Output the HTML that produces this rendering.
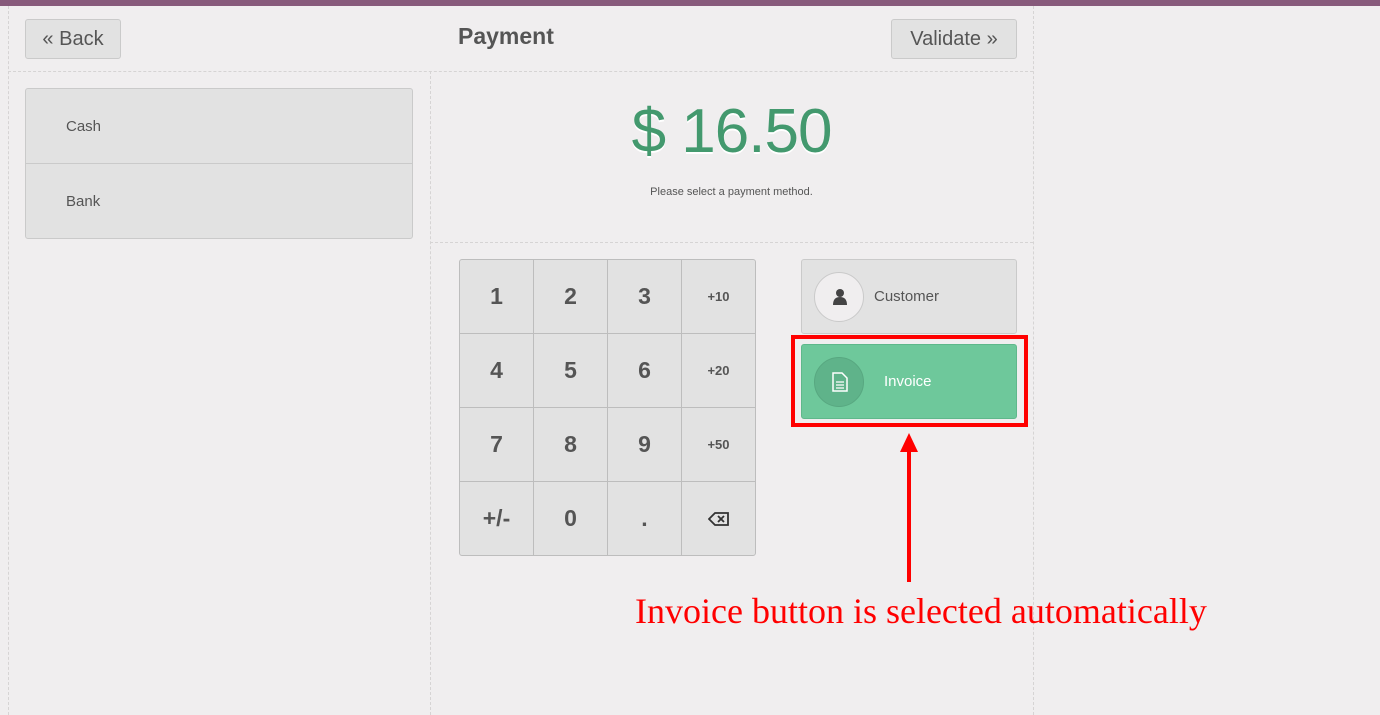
<!DOCTYPE html>
<html><head><style>
*{box-sizing:border-box;margin:0;padding:0}
body{width:1380px;height:715px;background:#f0eeef;font-family:"Liberation Sans",sans-serif;color:#555;position:relative;overflow:hidden}
.a{position:absolute}
.bar{left:0;top:0;width:1380px;height:6px;background:#875a7b}
.dv{border-left:1px dashed #d6d4d4}
.dh{border-top:1px dashed #d6d4d4}
.btn{background:#e2e2e2;border:1px solid #cacaca;border-radius:3px;font-size:20px;color:#555;display:flex;align-items:center;justify-content:center}
.pm{left:25px;top:88px;width:388px;height:151px;background:#e2e2e2;border:1px solid #cacaca;border-radius:3px}
.pm div{height:75px;line-height:75px;padding-left:40px;font-size:15px;color:#555}
.np{left:459px;top:259px;width:297px;height:297px;border:1px solid #bdbdbd;border-radius:3px;background:#e2e2e2;display:grid;grid-template-columns:74px 74px 74px 73px;grid-template-rows:74px 74px 74px 73px;overflow:hidden}
.np div{border-right:1px solid #bdbdbd;border-bottom:1px solid #bdbdbd;display:flex;align-items:center;justify-content:center;font-size:23px;font-weight:bold;color:#555}
.np div.s{font-size:13px}
.np div:nth-child(4n){border-right:none}
.np div:nth-child(n+13){border-bottom:none}
.circ{position:absolute;left:12px;top:12px;width:50px;height:50px;border-radius:50%}
</style></head><body>
<div class="a bar"></div>
<div class="a dv" style="left:8px;top:6px;height:709px"></div>
<div class="a dv" style="left:1033px;top:6px;height:709px"></div>
<div class="a dh" style="left:8px;top:71px;width:1025px"></div>
<div class="a dv" style="left:430px;top:71px;height:644px"></div>
<div class="a dh" style="left:430px;top:242px;width:603px"></div>

<div class="a btn" style="left:25px;top:19px;width:96px;height:40px">« Back</div>
<div class="a" style="left:458px;top:23px;font-size:23px;font-weight:bold;color:#555">Payment</div>
<div class="a btn" style="left:891px;top:19px;width:126px;height:40px">Validate »</div>

<div class="a pm"><div style="border-bottom:1px solid #cacaca">Cash</div><div>Bank</div></div>

<div class="a" style="left:430px;top:96px;width:603px;text-align:center;font-size:62px;letter-spacing:-1px;color:#43996e;text-shadow:0 2px #fff">$ 16.50</div>
<div class="a" style="left:430px;top:186px;width:603px;text-align:center;font-size:11px;color:#555">Please select a payment method.</div>

<div class="a np">
<div>1</div><div>2</div><div>3</div><div class="s">+10</div>
<div>4</div><div>5</div><div>6</div><div class="s">+20</div>
<div>7</div><div>8</div><div>9</div><div class="s">+50</div>
<div>+/-</div><div>0</div><div>.</div><div><svg width="22" height="16" viewBox="0 0 22 16"><path d="M7 2H20V14H7L1 8Z" fill="none" stroke="#333" stroke-width="1.8"/><path d="M10 5L16 11M16 5L10 11" stroke="#333" stroke-width="1.8"/></svg></div>
</div>

<div class="a" style="left:801px;top:259px;width:216px;height:75px;background:#e2e2e2;border:1px solid #cacaca;border-radius:3px">
<div class="circ" style="background:#f0eeef;border:1px solid #cacaca"><svg class="a" style="left:17px;top:15px" width="16" height="18" viewBox="0 0 16 18"><circle cx="8" cy="5" r="4" fill="#444"/><path d="M1 17Q1 9 8 9Q15 9 15 17Z" fill="#444"/></svg></div>
<div class="a" style="left:72px;top:28px;font-size:15px;color:#555">Customer</div>
</div>

<div class="a" style="left:791px;top:335px;width:237px;height:92px;border:4px solid #f00"></div>
<div class="a" style="left:801px;top:344px;width:216px;height:75px;background:#6ec89b;border:1px solid #5fb88b;border-radius:3px">
<div class="circ" style="background:#5fb38a;border:1px solid #58a881"><svg class="a" style="left:17px;top:14px" width="16" height="20" viewBox="0 0 16 20"><path d="M1 1H10L15 6V19H1Z" fill="none" stroke="#fff" stroke-width="1.5"/><path d="M4 10H12M4 13H12M4 16H12" stroke="#fff" stroke-width="1.3"/></svg></div>
<div class="a" style="left:82px;top:28px;font-size:15px;color:#fff">Invoice</div>
</div>

<svg class="a" style="left:895px;top:430px" width="30" height="155"><path d="M14 3L5 22H23Z" fill="#f00"/><rect x="12" y="20" width="4" height="132" fill="#f00"/></svg>
<div class="a" style="left:635px;top:590px;font-family:'Liberation Serif',serif;font-size:36px;color:#f00;white-space:nowrap">Invoice button is selected automatically</div>
</body></html>
